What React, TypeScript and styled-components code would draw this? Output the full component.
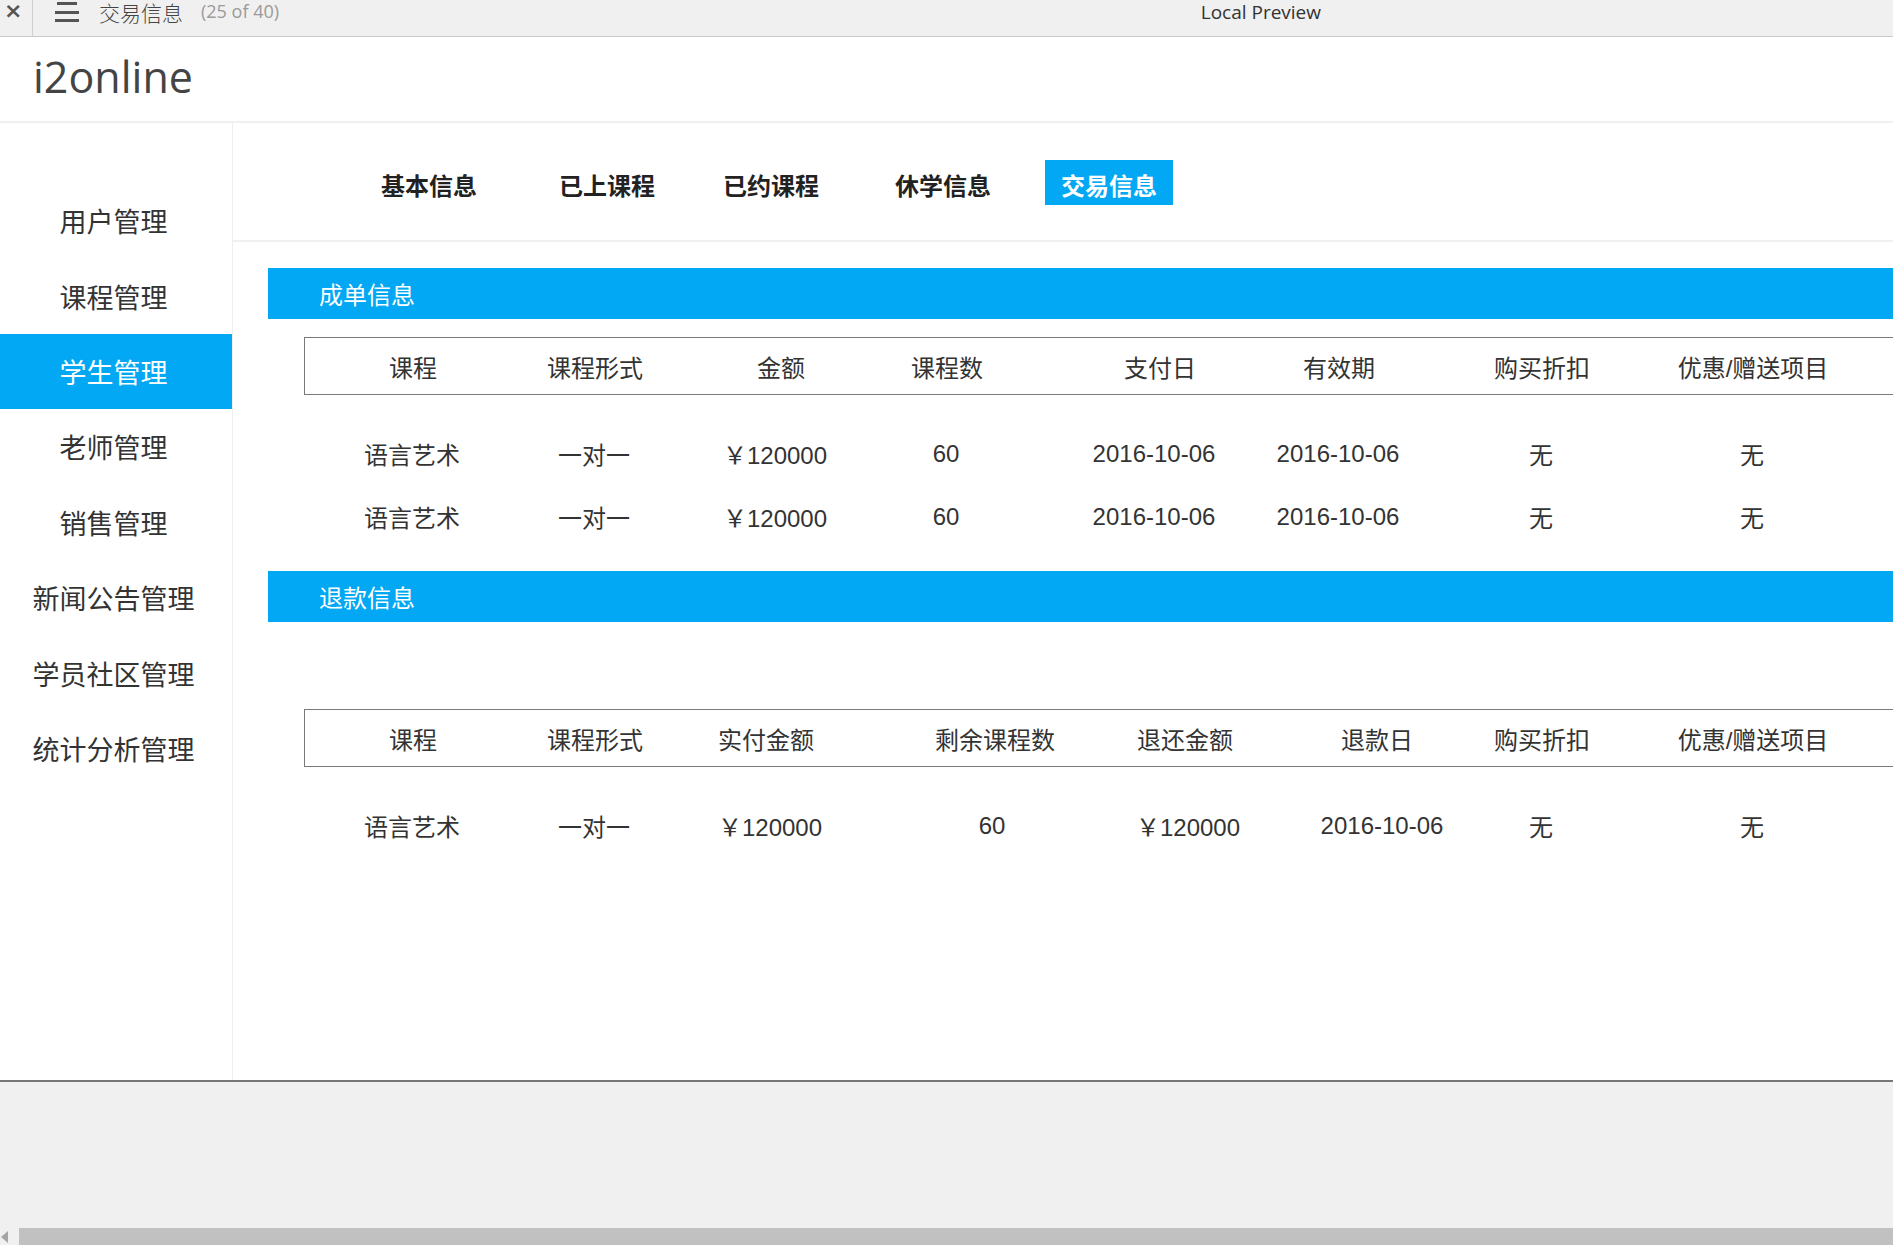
import styled, { createGlobalStyle } from "styled-components";

const BLUE = "#02a8f3";
const FONT = `"Liberation Sans", "Noto Sans CJK SC", sans-serif`;

const GlobalStyle = createGlobalStyle`
  html, body {
    margin: 0;
    padding: 0;
    background: #f0f0f0;
    overflow: hidden;
  }
  body {
    font-family: ${FONT};
  }
`;

const sidebarItems = [
  "用户管理",
  "课程管理",
  "学生管理",
  "老师管理",
  "销售管理",
  "新闻公告管理",
  "学员社区管理",
  "统计分析管理",
];

// gap before each tab, so the labels sit where the mock has them
const tabs = [
  { label: "基本信息", gap: 0 },
  { label: "已上课程", gap: 50 },
  { label: "已约课程", gap: 36 },
  { label: "休学信息", gap: 44 },
  { label: "交易信息", gap: 38 },
];

// column centres measured from the table's left border
const dealHeadAt = [108, 290, 476, 642, 855, 1034, 1237, 1448];
const dealRowAt = [108, 290, 471, 642, 850, 1034, 1237, 1448];
const refundHeadAt = [108, 290, 461, 690, 880, 1072, 1237, 1448];
const refundRowAt = [108, 290, 466, 688, 884, 1078, 1237, 1448];

const dealHead = ["课程", "课程形式", "金额", "课程数", "支付日", "有效期", "购买折扣", "优惠/赠送项目"];
const dealRows = [
  ["语言艺术", "一对一", "￥120000", "60", "2016-10-06", "2016-10-06", "无", "无"],
  ["语言艺术", "一对一", "￥120000", "60", "2016-10-06", "2016-10-06", "无", "无"],
];

const refundHead = ["课程", "课程形式", "实付金额", "剩余课程数", "退还金额", "退款日", "购买折扣", "优惠/赠送项目"];
const refundRows = [["语言艺术", "一对一", "￥120000", "60", "￥120000", "2016-10-06", "无", "无"]];

// turn centre positions into grid tracks: each track ends on a centre
const tracks = (at: number[]) =>
  at.map((c, i) => `${c - (i ? at[i - 1] : 0)}px`).join(" ") + " 1fr";

function MenuIcon() {
  return (
    <svg width="24" height="22" viewBox="0 0 24 22">
      <rect x="2" y="1" width="20" height="3" fill="#555" />
      <rect x="0" y="10" width="24" height="3" fill="#555" />
      <rect x="0" y="18" width="24" height="3" fill="#555" />
    </svg>
  );
}

function DataTable({
  head,
  headAt,
  rows,
  rowAt,
}: {
  head: string[];
  headAt: number[];
  rows: string[][];
  rowAt: number[];
}) {
  return (
    <TableWrap>
      <HeadRow $cols={tracks(headAt)}>
        {head.map((h, i) => (
          <Cell key={i}>{h}</Cell>
        ))}
      </HeadRow>
      <Rows>
        {rows.map((r, ri) => (
          <DataRow key={ri} $cols={tracks(rowAt)}>
            {r.map((c, i) => (
              <Cell key={i} $num={/^[0-9]/.test(c)}>
                {c}
              </Cell>
            ))}
          </DataRow>
        ))}
      </Rows>
    </TableWrap>
  );
}

export default function App() {
  return (
    <>
      <GlobalStyle />
      <Page>
        <TopBar>
          <CloseBtn>×</CloseBtn>
          <MenuBtn>
            <MenuIcon />
          </MenuBtn>
          <DocTitle>交易信息</DocTitle>
          <Counter>(25 of 40)</Counter>
          <PreviewTitle>Local Preview</PreviewTitle>
        </TopBar>

        <Frame>
          <Header>
            <Logo>i2online</Logo>
          </Header>
          <Body>
            <Sidebar>
              {sidebarItems.map((s) => (
                <NavItem key={s} $active={s === "学生管理"}>
                  {s}
                </NavItem>
              ))}
            </Sidebar>
            <Main>
              <TabBar>
                {tabs.map((t) => (
                  <TabLabel key={t.label} $gap={t.gap} $active={t.label === "交易信息"}>
                    {t.label}
                  </TabLabel>
                ))}
              </TabBar>

              <SectionBar $top={26}>成单信息</SectionBar>
              <TableSlot $top={18}>
                <DataTable head={dealHead} headAt={dealHeadAt} rows={dealRows} rowAt={dealRowAt} />
              </TableSlot>

              <SectionBar $top={21}>退款信息</SectionBar>
              <TableSlot $top={87}>
                <DataTable head={refundHead} headAt={refundHeadAt} rows={refundRows} rowAt={refundRowAt} />
              </TableSlot>
            </Main>
          </Body>
        </Frame>

        <Scrollbar>
          <ScrollArrow>
            <svg width="8" height="12" viewBox="0 0 8 12">
              <path d="M7 0 L0 6 L7 12 Z" fill="#a6a6a6" />
            </svg>
          </ScrollArrow>
          <ScrollThumb />
        </Scrollbar>
      </Page>
    </>
  );
}

const Page = styled.div`
  width: 1893px;
  height: 1245px;
  display: flex;
  flex-direction: column;
  background: #f0f0f0;
  overflow: hidden;
`;

const TopBar = styled.div`
  height: 36px;
  flex-shrink: 0;
  display: flex;
  align-items: flex-start;
  background: #f0f0f0;
  border-bottom: 1px solid #c9c9c9;
  color: #444;
`;

const CloseBtn = styled.div`
  width: 33px;
  height: 36px;
  border-right: 1px solid #cfcfcf;
  font-family: "DejaVu Sans", sans-serif;
  font-size: 22px;
  font-weight: bold;
  line-height: 22px;
  color: #555;
  padding-left: 4px;
  box-sizing: border-box;
`;

const MenuBtn = styled.div`
  margin-left: 22px;
  padding-top: 1px;
  display: flex;
`;

const DocTitle = styled.div`
  margin-left: 20px;
  font-family: "Noto Sans CJK SC", sans-serif;
  font-size: 21px;
  font-weight: 300;
  line-height: 24px;
  color: #444;
`;

const Counter = styled.div`
  margin-left: 18px;
  font-family: "Open Sans", sans-serif;
  font-size: 18px;
  line-height: 22px;
  color: #9a9a9a;
`;

const PreviewTitle = styled.div`
  margin-left: auto;
  margin-right: 572px;
  font-family: "Open Sans", sans-serif;
  font-size: 19px;
  line-height: 24px;
  color: #333;
`;

const Frame = styled.div`
  height: 1043px;
  flex-shrink: 0;
  background: #fff;
  border-bottom: 2px solid #777;
  display: flex;
  flex-direction: column;
`;

const Header = styled.div`
  height: 84px;
  flex-shrink: 0;
  border-bottom: 2px solid #f0f0f0;
  display: flex;
  align-items: center;
  padding-left: 33px;
`;

const Logo = styled.div`
  font-family: "Open Sans", sans-serif;
  font-size: 43px;
  color: #444;
  line-height: 1;
  margin-top: -6px;
`;

const Body = styled.div`
  flex: 1;
  display: flex;
  min-height: 0;
`;

const Sidebar = styled.nav`
  width: 232px;
  flex-shrink: 0;
  border-right: 1px solid #eee;
  padding-top: 60px;
`;

const NavItem = styled.div<{ $active?: boolean }>`
  height: 75.4px;
  display: flex;
  align-items: center;
  justify-content: center;
  padding-right: 5px;
  font-family: "Noto Sans CJK SC", sans-serif;
  font-size: 27px;
  color: ${({ $active }) => ($active ? "#fff" : "#333")};
  background: ${({ $active }) => ($active ? BLUE : "transparent")};
`;

const Main = styled.main`
  flex: 1;
  min-width: 0;
  overflow: hidden;
`;

const TabBar = styled.div`
  display: flex;
  padding: 37px 0 35px 132px;
  border-bottom: 2px solid #f0f0f0;
`;

const TabLabel = styled.div<{ $active?: boolean; $gap: number }>`
  margin-left: ${({ $gap }) => $gap}px;
  height: 45px;
  padding: 3px 16px 0;
  box-sizing: border-box;
  display: flex;
  align-items: center;
  font-family: "Noto Sans CJK SC", sans-serif;
  font-size: 24px;
  font-weight: 700;
  color: ${({ $active }) => ($active ? "#fff" : "#222")};
  background: ${({ $active }) => ($active ? BLUE : "transparent")};
`;

const SectionBar = styled.div<{ $top: number }>`
  margin: ${({ $top }) => $top}px 0 0 35px;
  height: 51px;
  background: ${BLUE};
  color: #fff;
  display: flex;
  align-items: center;
  padding-left: 51px;
  font-family: "Noto Sans CJK SC", sans-serif;
  font-size: 24px;
`;

const TableSlot = styled.div<{ $top: number }>`
  margin: ${({ $top }) => $top}px 0 0 71px;
`;

const TableWrap = styled.div`
  color: #333;
  font-size: 24px;
`;

const HeadRow = styled.div<{ $cols: string }>`
  display: grid;
  grid-template-columns: ${({ $cols }) => $cols};
  align-items: center;
  height: 58px;
  box-sizing: border-box;
  padding-top: 6px;
  border: 1px solid #7a7a7a;
  border-right: none;
`;

const Rows = styled.div`
  padding-top: 29px;
`;

const DataRow = styled.div<{ $cols: string }>`
  display: grid;
  grid-template-columns: ${({ $cols }) => $cols};
  align-items: center;
  height: 63px;
`;

// right edge sits on the track end, then shifted by half its width so it is centred there
const Cell = styled.div<{ $num?: boolean }>`
  justify-self: end;
  transform: translate(50%, ${({ $num }) => ($num ? "-2px" : "0")});
  white-space: nowrap;
  line-height: 30px;
`;

const Scrollbar = styled.div`
  margin-top: auto;
  height: 17px;
  display: flex;
  background: #f0f0f0;
`;

const ScrollArrow = styled.div`
  width: 18px;
  display: flex;
  align-items: center;
  padding-left: 1px;
`;

const ScrollThumb = styled.div`
  flex: 1;
  background: #c1c1c1;
`;
